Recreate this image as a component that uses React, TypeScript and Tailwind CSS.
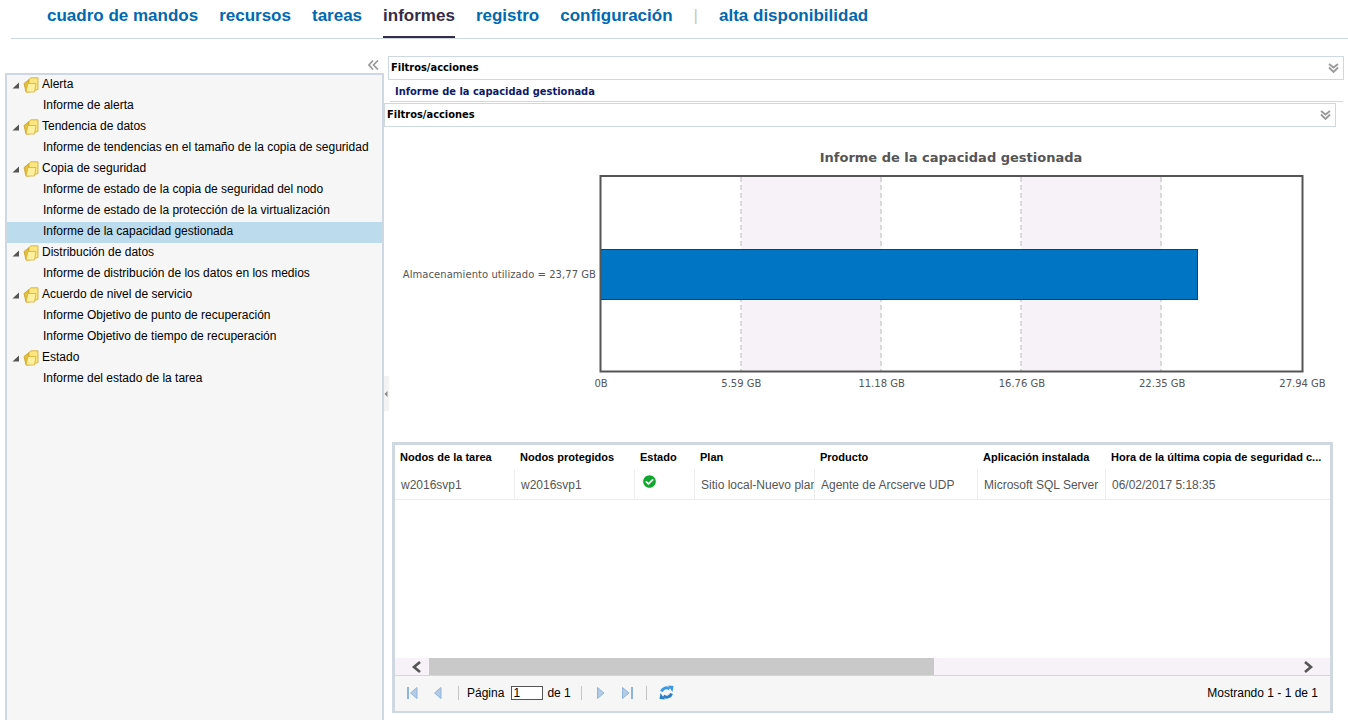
import { FaCheckCircle } from "react-icons/fa";

const navItems = ["cuadro de mandos", "recursos", "tareas", "informes", "registro", "configuración"];

const treeGroups = [
  { name: "Alerta", items: ["Informe de alerta"] },
  { name: "Tendencia de datos", items: ["Informe de tendencias en el tamaño de la copia de seguridad"] },
  {
    name: "Copia de seguridad",
    items: [
      "Informe de estado de la copia de seguridad del nodo",
      "Informe de estado de la protección de la virtualización",
      "Informe de la capacidad gestionada",
    ],
  },
  { name: "Distribución de datos", items: ["Informe de distribución de los datos en los medios"] },
  {
    name: "Acuerdo de nivel de servicio",
    items: ["Informe Objetivo de punto de recuperación", "Informe Objetivo de tiempo de recuperación"],
  },
  { name: "Estado", items: ["Informe del estado de la tarea"] },
];

const columns = [
  { title: "Nodos de la tarea", value: "w2016svp1", width: "w-[120px]" },
  { title: "Nodos protegidos", value: "w2016svp1", width: "w-[120px]" },
  { title: "Estado", value: "", width: "w-[60px]" },
  { title: "Plan", value: "Sitio local-Nuevo plan", width: "w-[120px]" },
  { title: "Producto", value: "Agente de Arcserve UDP", width: "w-[163px]" },
  { title: "Aplicación instalada", value: "Microsoft SQL Server", width: "w-[128px]" },
  { title: "Hora de la última copia de seguridad c...", value: "06/02/2017 5:18:35", width: "w-[223px]" },
];

const Folder = () => (
  <svg width="16" height="16" viewBox="0 0 16 16" className="shrink-0 mt-[2px]">
    <path d="M1 6.5 L6 2.5 L6 15 L3 15 Z" fill="#e3bd3c" stroke="#c9a227" strokeWidth="0.8" />
    <path d="M6 2.5 L8 0.8 L15 0.8 L15 12.5 L6 15 Z" fill="#fbe680" stroke="#cfa92c" strokeWidth="0.8" />
    <path d="M3 15 L5 6.5 L13 6.5 L11.5 15 Z" fill="#fff0a0" stroke="#d8b232" strokeWidth="0.8" />
  </svg>
);

const DoubleChevronDown = () => (
  <svg width="11" height="11" viewBox="0 0 11 11" fill="none" stroke="#999999" strokeWidth="1.8">
    <path d="M1 1 L5.5 4.5 L10 1" />
    <path d="M1 4.5 L5.5 9 L10 4.5" />
  </svg>
);

const FilterBar = ({ className }: { className: string }) => (
  <div className={`flex items-center justify-between border border-[#cfd8e0] pl-[2px] pr-[4px] h-[24px] ${className}`}>
    <span className="font-['DejaVu_Sans_Condensed','DejaVu_Sans',sans-serif] text-[11px] font-bold text-black">
      Filtros/acciones
    </span>
    <DoubleChevronDown />
  </div>
);

const PagerArrow = ({ dir, bar }: { dir: "left" | "right"; bar?: boolean }) => (
  <svg width="12" height="14" viewBox="0 0 12 14">
    {dir === "left" ? (
      <>
        {bar && <rect x="0" y="1" width="2" height="12" fill="#8fb4dc" />}
        <path d="M10 1.5 V12.5 L3.5 7 Z" fill="#b4cbe6" stroke="#8fb4dc" />
      </>
    ) : (
      <>
        {bar && <rect x="10" y="1" width="2" height="12" fill="#8fb4dc" />}
        <path d="M1.5 1.5 V12.5 L8 7 Z" fill="#b4cbe6" stroke="#8fb4dc" />
      </>
    )}
  </svg>
);

const Sep = () => <div className="h-[14px] w-px bg-[#c4c4c4]" />;

const Chart = () => {
  const ticks = ["0B", "5.59 GB", "11.18 GB", "16.76 GB", "22.35 GB", "27.94 GB"];
  return (
    <svg width="952" height="270" viewBox="384 127 952 270" className="block font-['DejaVu_Sans']">
      <text x="951" y="162" textAnchor="middle" fontSize="13" fontWeight="700" fill="#555555">
        Informe de la capacidad gestionada
      </text>
      <rect x="741" y="177" width="140" height="194" fill="#f7f2f7" />
      <rect x="1021" y="177" width="140" height="194" fill="#f7f2f7" />
      {[741, 881, 1021, 1161].map((x) => (
        <line key={x} x1={x} x2={x} y1="177" y2="371" stroke="#d0d0d0" strokeWidth="1.5" strokeDasharray="5 3" />
      ))}
      <rect x="600.5" y="249.5" width="597" height="50" fill="#0075c4" stroke="#14405f" />
      <rect x="600.5" y="176" width="702" height="195.5" fill="none" stroke="#555555" strokeWidth="2" />
      <text x="596" y="278" textAnchor="end" fontSize="10" letterSpacing="0.05" fill="#555555">
        Almacenamiento utilizado = 23,77 GB
      </text>
      {ticks.map((t, i) => (
        <text key={t} x={601 + i * 140.3} y="387" textAnchor="middle" fontSize="10" fill="#555555">
          {t}
        </text>
      ))}
    </svg>
  );
};

export default function App() {
  return (
    <div className="w-[1348px] h-[720px] overflow-hidden bg-white font-['Liberation_Sans',sans-serif] relative">
      {/* top nav */}
      <div className="ml-[11px] h-[39px] border-b border-[#cfd8e0] flex items-start pl-[36px] gap-[21px]">
        {navItems.map((n) => (
          <div
            key={n}
            className={`h-[38px] pt-[5px] text-[17px] font-bold leading-[21px] ${
              n === "informes" ? "text-[#332c4b] border-b-2 border-[#332c4b]" : "text-[#0069b0]"
            }`}
          >
            {n}
          </div>
        ))}
        <div className="pt-[5px] text-[17px] leading-[21px] text-[#c4c8cc]">|</div>
        <div className="h-[38px] pt-[5px] text-[17px] font-bold leading-[21px] text-[#0069b0]">
          alta disponibilidad
        </div>
      </div>

      <div className="flex">
        {/* left tree */}
        <div className="w-[384px] pl-[5px] shrink-0">
          <div className="h-[34px] flex justify-end items-end pr-[5px] pb-[3px]">
            <svg width="11" height="10" viewBox="0 0 11 10" fill="none" stroke="#999999" strokeWidth="1.7">
              <path d="M5 0.5 L1 5 L5 9.5" />
              <path d="M10 0.5 L5.5 5 L10 9.5" />
            </svg>
          </div>
          <div className="h-[647px] border-2 border-[#cfd8e0] border-b-0 bg-[#f6f6f6] text-[12px] text-black">
            {treeGroups.map((g) => (
              <div key={g.name}>
                <div className="h-[21px] flex items-start pl-[5px]">
                  <svg width="7" height="7" viewBox="0 0 7 7" className="shrink-0 mr-[4px] mt-[7px]">
                    <path d="M7 0.5 V6.5 H0.5 Z" fill="#555555" />
                  </svg>
                  <Folder />
                  <span className="ml-[3px] leading-[18px]">{g.name}</span>
                </div>
                {g.items.map((it) => (
                  <div
                    key={it}
                    className={`h-[21px] leading-[19px] pl-[36px] ${
                      it === "Informe de la capacidad gestionada" ? "bg-[#bcdcee]" : ""
                    }`}
                  >
                    {it}
                  </div>
                ))}
              </div>
            ))}
          </div>
        </div>

        {/* right side */}
        <div className="flex-1 min-w-0">
          <FilterBar className="mt-[17px] ml-[4px] mr-[4px]" />
          <div className="ml-[6px] mr-[5px] h-[22px] border-b border-[#cfd8e0] pl-[5px] leading-[23px] font-['DejaVu_Sans_Condensed','DejaVu_Sans',sans-serif] text-[11px] font-bold text-[#0d1a66]">
            Informe de la capacidad gestionada
          </div>
          <FilterBar className="mt-[1px] mr-[12px]" />
          <Chart />

          {/* grid */}
          <div className="mt-[45px] ml-[8px] mr-[15px] h-[271px] border-[3px] border-[#cfd8e0] flex flex-col border-b-2">
            <div className="flex h-[24px] items-center text-[11px] font-bold text-black">
              {columns.map((c) => (
                <div key={c.title} className={`${c.width} pl-[5px] whitespace-nowrap overflow-hidden shrink-0`}>
                  {c.title}
                </div>
              ))}
            </div>
            <div className="flex h-[31px] border-b border-[#e8ecef] text-[12px] text-[#555555]">
              {columns.map((c) => (
                <div
                  key={c.title}
                  className={`${c.width} pl-[6px] leading-[33px] whitespace-nowrap overflow-hidden shrink-0 border-r border-[#eeeeee] last:border-r-0`}
                >
                  {c.title === "Estado" ? <FaCheckCircle className="text-[#11a72e] mt-[6px] ml-[2px]" size={13} /> : c.value}
                </div>
              ))}
            </div>
            <div className="flex-1" />
            <div className="h-[18px] bg-[#f7f2f7] border-b border-[#cfd8e0] flex items-center">
              <div className="w-[34px] flex justify-end pr-[6px]">
                <svg width="12" height="12" viewBox="0 0 12 12" fill="none" stroke="#555555" strokeWidth="2.6">
                  <path d="M9 1 L3 6 L9 11" />
                </svg>
              </div>
              <div className="w-[505px] h-[17px] bg-[#c9c9c9]" />
              <div className="flex-1" />
              <div className="w-[38px] flex justify-end pr-[16px]">
                <svg width="12" height="12" viewBox="0 0 12 12" fill="none" stroke="#555555" strokeWidth="2.6">
                  <path d="M3 1 L9 6 L3 11" />
                </svg>
              </div>
            </div>
            <div className="h-[35px] shrink-0 bg-[#f6f6f6] flex items-center pl-[12px] pr-[12px] pb-[2px] text-[12px] text-black">
              <PagerArrow dir="left" bar />
              <div className="ml-[12px]"><PagerArrow dir="left" /></div>
              <div className="ml-[15px]"><Sep /></div>
              <span className="ml-[8px]">Página</span>
              <div className="ml-[7px] w-[32px] h-[14px] border border-[#555555] bg-white leading-[12px] pl-[1px]">1</div>
              <span className="ml-[4px]">de 1</span>
              <div className="ml-[10px]"><Sep /></div>
              <div className="ml-[14px]"><PagerArrow dir="right" /></div>
              <div className="ml-[13px]"><PagerArrow dir="right" bar /></div>
              <div className="ml-[13px]"><Sep /></div>
              <svg width="15" height="15" viewBox="0 0 15 15" className="ml-[12px]" fill="none" strokeWidth="3">
                <path d="M2.5 6.5 A5 5 0 0 1 10.5 4" stroke="#3a9ae6" />
                <path d="M9 0.5 L14.5 1 L13.5 7 Z" fill="#3a9ae6" />
                <path d="M12.5 8.5 A5 5 0 0 1 4.5 11" stroke="#2a7fc8" />
                <path d="M6 14.5 L0.5 14 L1.5 8 Z" fill="#2a7fc8" />
              </svg>
              <span className="ml-auto">Mostrando 1 - 1 de 1</span>
            </div>
          </div>
        </div>
      </div>

      {/* splitter handle */}
      <div className="absolute left-[384px] top-[376px] w-[5px] h-[35px] bg-[#f3f3f3] flex items-center">
        <svg width="4" height="6" viewBox="0 0 4 6"><path d="M3.5 0 V6 L0.5 3 Z" fill="#8a8a8a" /></svg>
      </div>
    </div>
  );
}
